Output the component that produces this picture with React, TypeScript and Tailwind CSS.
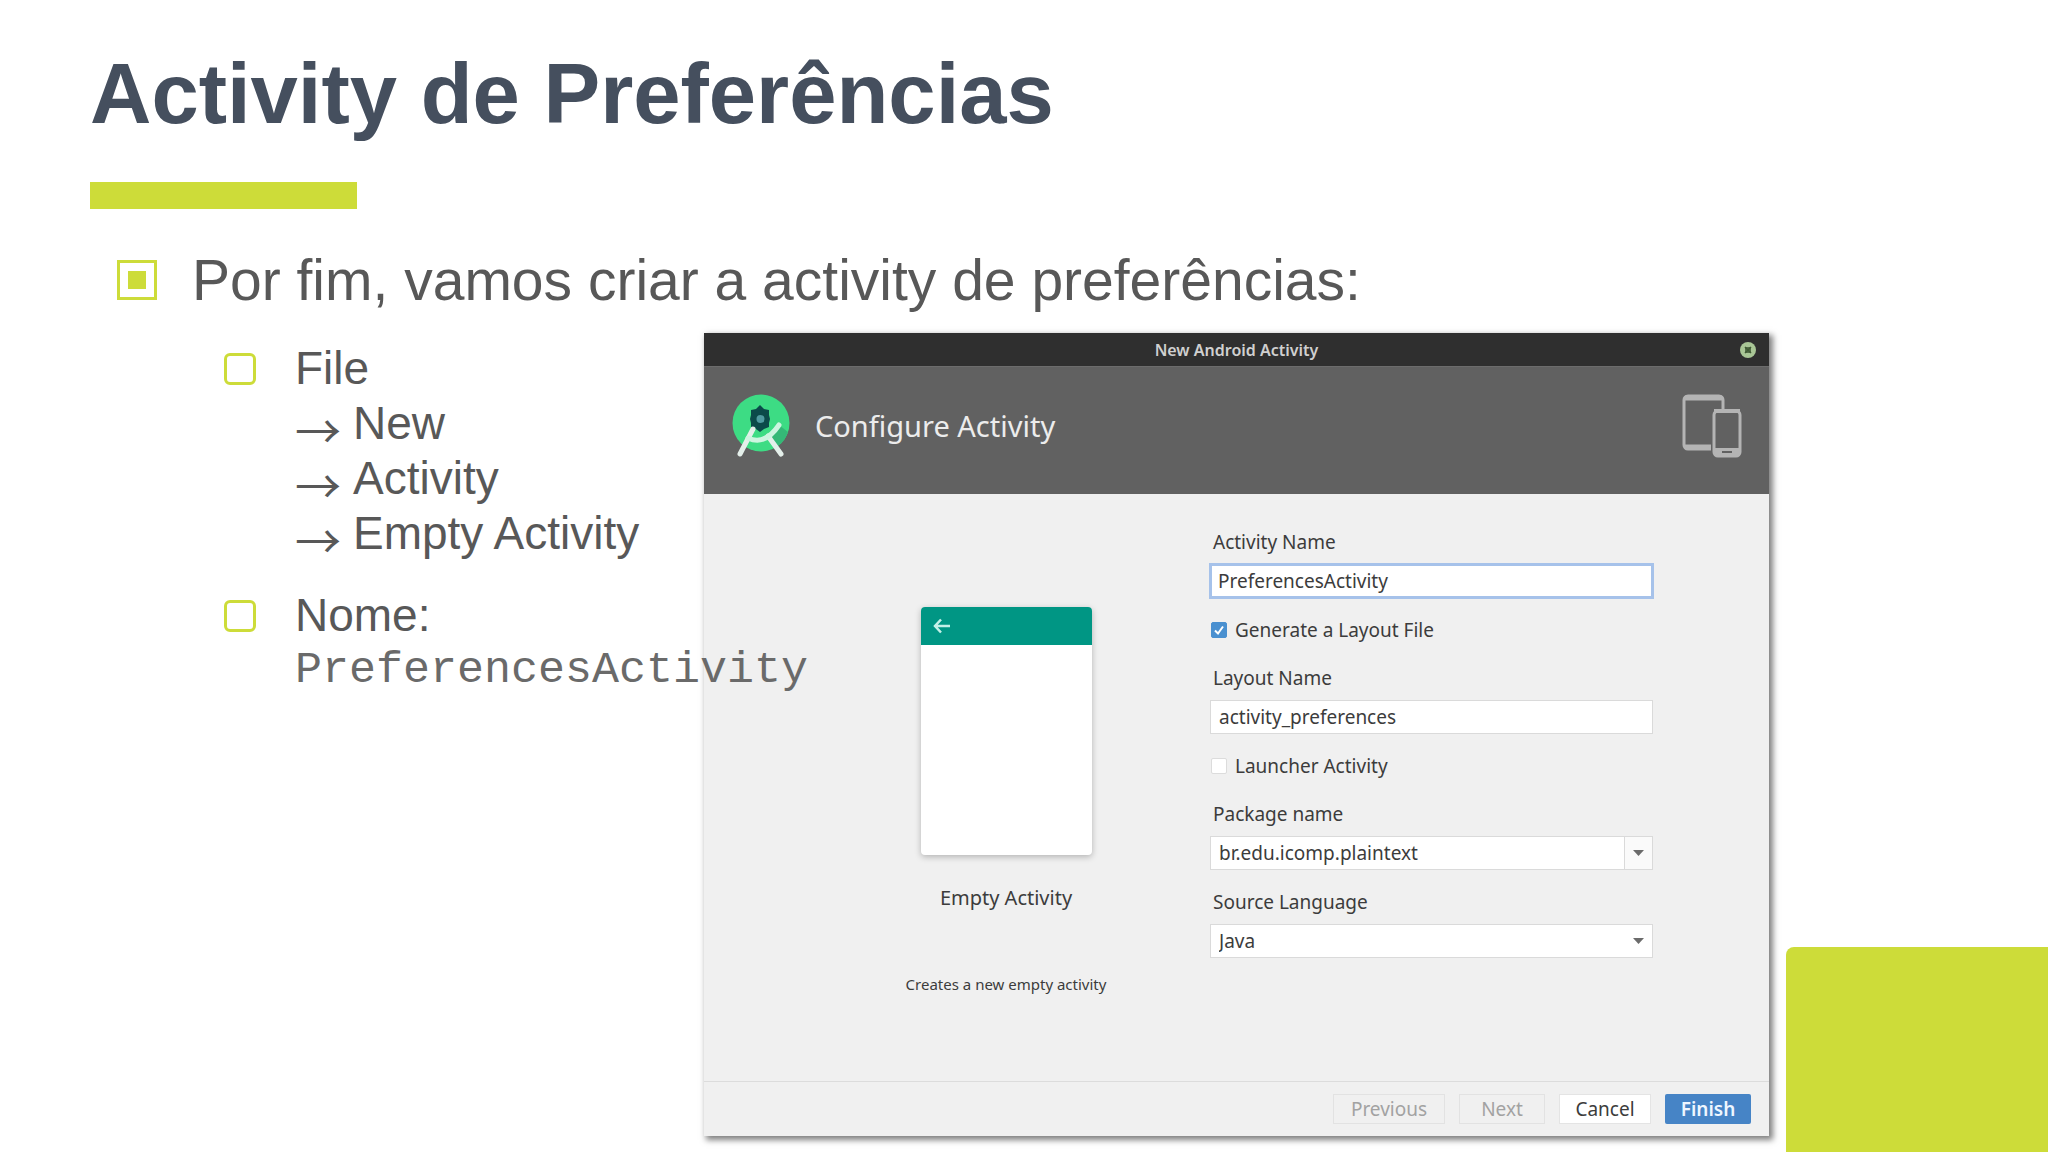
import { useState } from "react"
import type { ReactNode } from "react"

const pathSteps = ["New", "Activity", "Empty Activity"]

function SubBullet({ children }: { children: ReactNode }) {
  return (
    <li className="flex items-start">
      <span className="mt-3 mr-[39px] size-8 shrink-0 rounded-md border-3 border-[#cddc39]" />
      <div className="whitespace-nowrap">{children}</div>
    </li>
  )
}

function StudioLogo() {
  return (
    <svg width="60" height="64" viewBox="0 0 60 64" fill="none" aria-hidden="true">
      <circle cx="30" cy="29" r="28.5" fill="#3ddc84" />
      <path d="M48 31 L57 38 A28.5 28.5 0 0 1 47 52 L37 42 Z" fill="#35b877" />
      <path d="M29 11l4 4 5 1v5l1 4-1 4v4l-5 2-4 3-4-3-5-2v-4l-1-4 1-4v-5l5-1z" fill="#0b4a4a" />
      <circle cx="29.5" cy="25" r="4" fill="#4f9aa0" />
      <path d="M22 35 L9 60 M37 42 L50 60" stroke="#e4efea" strokeWidth="5" strokeLinecap="round" />
      <path d="M17 44 Q34 52 48 31" stroke="#cdf5e0" strokeWidth="5" strokeLinecap="round" />
    </svg>
  )
}

function DevicesIcon() {
  return (
    <svg width="60" height="64" viewBox="0 0 60 64" fill="none" aria-hidden="true">
      <rect x="2" y="2" width="39" height="53" rx="4" stroke="#b4b4b4" strokeWidth="3" />
      <path d="M3 4h37M3 53h37" stroke="#b4b4b4" strokeWidth="5" />
      <rect x="29" y="15" width="31" height="49" fill="#616161" />
      <rect x="32" y="17" width="26" height="45" rx="4" stroke="#b4b4b4" strokeWidth="3" />
      <path d="M32 17h26" stroke="#b4b4b4" strokeWidth="4" />
      <path d="M32 58h26" stroke="#b4b4b4" strokeWidth="8" />
      <path d="M40 58h10" stroke="#616161" strokeWidth="2" />
    </svg>
  )
}

function Caret() {
  return (
    <svg className="pointer-events-none" width="11" height="6" viewBox="0 0 11 6" aria-hidden="true">
      <path d="M0 0h11L5.5 6z" fill="#6b6b6b" />
    </svg>
  )
}

function Field({ id, label, children }: { id: string; label: string; children: ReactNode }) {
  return (
    <div className="flex flex-col gap-2">
      <label htmlFor={id} className="pl-[3px] leading-7">{label}</label>
      {children}
    </div>
  )
}

function CheckRow({ label, checked, onChange }: { label: string; checked: boolean; onChange: (v: boolean) => void }) {
  return (
    <label className="mb-0.5 flex h-7 items-center gap-2 pl-px">
      <span className="relative flex size-4">
        <input
          type="checkbox"
          checked={checked}
          onChange={(e) => onChange(e.target.checked)}
          className="size-4 appearance-none rounded-xs border border-[#dcdcdc] bg-white checked:border-[#4a90d0] checked:bg-[#4a90d0]"
        />
        {checked && (
          <svg className="pointer-events-none absolute inset-0" width="16" height="16" viewBox="0 0 16 16" fill="none">
            <path d="M4 8.5l3 3 5-7" stroke="#fff" strokeWidth="2" />
          </svg>
        )}
      </span>
      {label}
    </label>
  )
}

function ActivityDialog() {
  const [name, setName] = useState("PreferencesActivity")
  const [layout, setLayout] = useState("activity_preferences")
  const [generate, setGenerate] = useState(true)
  const [launcher, setLauncher] = useState(false)
  const [pkg, setPkg] = useState("br.edu.icomp.plaintext")

  return (
    <section className="min-w-0 flex-1 bg-[#f0f0f0] font-['Noto_Sans',sans-serif] text-[19px] text-[#3c3c3c] shadow-[3px_3px_6px_1px_rgba(0,0,0,0.5)]">
      {/* Title bar */}
      <div className="grid h-[33px] grid-cols-[1fr_auto_1fr] items-center bg-[#2f2f2f] px-3">
        <h2 className="col-start-2 text-base font-semibold text-[#d0d0d0]">New Android Activity</h2>
        <button aria-label="Close" className="justify-self-end">
          <svg width="18" height="18" viewBox="0 0 18 18" fill="none">
            <circle cx="9" cy="9" r="8" fill="#a9c696" />
            <path d="M6 6h6v6H6z" fill="#55704a" />
            <path d="M6 6l6 6M12 6l-6 6" stroke="#3f5a33" strokeWidth="1.5" />
          </svg>
        </button>
      </div>

      {/* Header */}
      <div className="flex h-32 items-center gap-6 border-t border-[#6c6c6c] bg-[#616161] px-[27px] pb-2.5">
        <StudioLogo />
        <h3 className="text-[29px] leading-10 text-[#ececec]">Configure Activity</h3>
        <span className="ml-auto"><DevicesIcon /></span>
      </div>

      {/* Body */}
      <div className="flex pt-[34px] pb-[83px]">
        <div className="flex w-[506px] shrink-0 flex-col items-center pt-[79px] pl-[98px]">
          <div className="h-[248px] w-[171px] overflow-hidden rounded-sm bg-white shadow-[0_2px_6px_rgba(0,0,0,0.25)]">
            <div className="flex h-[38px] items-center bg-[#009684] px-3">
              <svg width="18" height="16" viewBox="0 0 18 16" fill="none" aria-hidden="true">
                <path d="M17 8H2M8 1.5L2 8l6 6.5" stroke="#c4f0e8" strokeWidth="2.5" />
              </svg>
            </div>
          </div>
          <p className="mt-[29px] text-xl leading-7">Empty Activity</p>
          <p className="mt-[58px] text-[15px] leading-7">Creates a new empty activity</p>
        </div>

        <form className="mr-[116px] flex min-w-0 flex-1 flex-col gap-[18px]">
          <Field id="activity-name" label="Activity Name">
            <input id="activity-name" value={name} onChange={(e) => setName(e.target.value)} className="h-[34px] bg-white px-2 outline-3 -outline-offset-2 outline-[#a6c2ea]" />
          </Field>
          <CheckRow label="Generate a Layout File" checked={generate} onChange={setGenerate} />
          <Field id="layout-name" label="Layout Name">
            <input id="layout-name" value={layout} onChange={(e) => setLayout(e.target.value)} className="h-[34px] border border-[#dadada] bg-white px-2 outline-none" />
          </Field>
          <CheckRow label="Launcher Activity" checked={launcher} onChange={setLauncher} />
          <Field id="package" label="Package name">
            <div className="flex h-[34px] border border-[#dadada] bg-white">
              <input id="package" value={pkg} onChange={(e) => setPkg(e.target.value)} className="min-w-0 flex-1 px-2 outline-none" />
              <button type="button" aria-label="Show packages" className="flex w-7 items-center justify-center border-l border-[#dadada] bg-[#fafafa]">
                <Caret />
              </button>
            </div>
          </Field>
          <Field id="language" label="Source Language">
            <div className="relative flex h-[34px] border border-[#dadada] bg-white">
              <select id="language" className="w-full appearance-none px-2 outline-none">
                <option>Java</option>
                <option>Kotlin</option>
              </select>
              <span className="pointer-events-none absolute inset-y-0 right-2 flex items-center"><Caret /></span>
            </div>
          </Field>
        </form>
      </div>

      {/* Footer */}
      <div className="flex justify-end gap-[14px] border-t border-[#dcdcdc] px-[18px] py-3">
        <button disabled className="h-[30px] w-[112px] border border-[#e2e2e2] text-[#a2a2a2]">Previous</button>
        <button disabled className="h-[30px] w-[86px] border border-[#e2e2e2] text-[#a2a2a2]">Next</button>
        <button className="h-[30px] w-[92px] border border-[#e4e4e4] bg-white">Cancel</button>
        <button className="h-[30px] w-[86px] rounded-xs bg-[#4684c6] font-semibold text-[#eef6ff]">Finish</button>
      </div>
    </section>
  )
}

export default function App() {
  return (
    <main className="flex min-h-screen flex-col bg-white font-['Liberation_Sans',Arial,sans-serif] text-[#585858]">
      <header className="px-[90px] pt-[46px]">
        <h1 className="text-[85px] leading-[96px] font-bold text-[#454f5e]">Activity de Preferências</h1>
        <div className="mt-10 h-[27px] w-[267px] bg-[#cddc39]" />
      </header>

      <div className="mt-[39px] flex items-center pl-[117px]">
        <span className="mr-[35px] flex size-10 items-center justify-center border-3 border-[#cddc39]">
          <span className="size-[18px] bg-[#cddc39]" />
        </span>
        <p className="text-[57px] leading-[64px]">Por fim, vamos criar a activity de preferências:</p>
      </div>

      <div className="mt-[21px] flex flex-1 items-start">
        <ul className="relative z-10 flex w-[704px] shrink-0 flex-col gap-[27px] pt-2 pl-[224px] text-[46px] leading-[55px]">
          <SubBullet>
            <p>File</p>
            {pathSteps.map((step) => (
              <p key={step} className="flex items-end gap-3">
                <span className="font-['Noto_Sans_CJK_JP',sans-serif] leading-none">→</span>
                <span>{step}</span>
              </p>
            ))}
          </SubBullet>
          <SubBullet>
            <p>Nome:</p>
            <p className="font-['Liberation_Mono',monospace] text-[45px] text-[#6a6a6a]">PreferencesActivity</p>
          </SubBullet>
        </ul>

        <ActivityDialog />

        <div className="ml-[17px] h-[205px] w-[262px] shrink-0 self-end rounded-tl-lg bg-[#cddc39]" />
      </div>
    </main>
  )
}
